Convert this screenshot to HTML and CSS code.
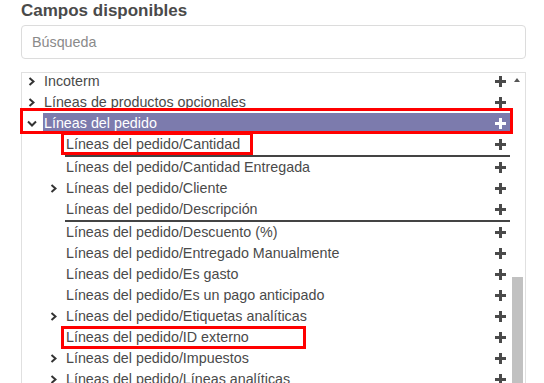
FILE: index.html
```html
<!DOCTYPE html>
<html>
<head>
<link rel="stylesheet" href="styles.css">
</head>
<body>

<div class="panel">
    <h3 class="title">Campos disponibles</h3>
    <input type="text" class="search" placeholder="Búsqueda">

    <div class="fields">
        <div class="tree">
            <div class="row">
                <span class="caret"><svg width="7" height="9" viewBox="0 0 7 9"><polyline points="1.5,1 5.5,4.5 1.5,8" /></svg></span>
                <div class="field"><span class="name">Incoterm</span><span class="add"><svg width="11" height="11" viewBox="0 0 11 11"><rect x="4" y="0" width="3" height="11"/><rect x="0" y="4" width="11" height="3"/></svg></span></div>
            </div>
            <div class="row">
                <span class="caret"><svg width="7" height="9" viewBox="0 0 7 9"><polyline points="1.5,1 5.5,4.5 1.5,8" /></svg></span>
                <div class="field"><span class="name">Líneas de productos opcionales</span><span class="add"><svg width="11" height="11" viewBox="0 0 11 11"><rect x="4" y="0" width="3" height="11"/><rect x="0" y="4" width="11" height="3"/></svg></span></div>
            </div>
            <div class="row open marked">
                <span class="caret"><svg width="10" height="7" viewBox="0 0 10 7"><polyline points="1,1.5 5,5.5 9,1.5" /></svg></span>
                <div class="field selected"><span class="name">Líneas del pedido</span><span class="add"><svg width="11" height="11" viewBox="0 0 11 11"><rect x="4" y="0" width="3" height="11"/><rect x="0" y="4" width="11" height="3"/></svg></span></div>
            </div>

            <div class="row child">
                <span class="caret"></span>
                <div class="field split mark-qty"><span class="name">Líneas del pedido/Cantidad</span><span class="add"><svg width="11" height="11" viewBox="0 0 11 11"><rect x="4" y="0" width="3" height="11"/><rect x="0" y="4" width="11" height="3"/></svg></span></div>
            </div>
            <div class="row child">
                <span class="caret"></span>
                <div class="field"><span class="name">Líneas del pedido/Cantidad Entregada</span><span class="add"><svg width="11" height="11" viewBox="0 0 11 11"><rect x="4" y="0" width="3" height="11"/><rect x="0" y="4" width="11" height="3"/></svg></span></div>
            </div>
            <div class="row child">
                <span class="caret"><svg width="7" height="9" viewBox="0 0 7 9"><polyline points="1.5,1 5.5,4.5 1.5,8" /></svg></span>
                <div class="field"><span class="name">Líneas del pedido/Cliente</span><span class="add"><svg width="11" height="11" viewBox="0 0 11 11"><rect x="4" y="0" width="3" height="11"/><rect x="0" y="4" width="11" height="3"/></svg></span></div>
            </div>
            <div class="row child">
                <span class="caret"></span>
                <div class="field split"><span class="name">Líneas del pedido/Descripción</span><span class="add"><svg width="11" height="11" viewBox="0 0 11 11"><rect x="4" y="0" width="3" height="11"/><rect x="0" y="4" width="11" height="3"/></svg></span></div>
            </div>
            <div class="row child">
                <span class="caret"></span>
                <div class="field"><span class="name">Líneas del pedido/Descuento (%)</span><span class="add"><svg width="11" height="11" viewBox="0 0 11 11"><rect x="4" y="0" width="3" height="11"/><rect x="0" y="4" width="11" height="3"/></svg></span></div>
            </div>
            <div class="row child">
                <span class="caret"></span>
                <div class="field"><span class="name">Líneas del pedido/Entregado Manualmente</span><span class="add"><svg width="11" height="11" viewBox="0 0 11 11"><rect x="4" y="0" width="3" height="11"/><rect x="0" y="4" width="11" height="3"/></svg></span></div>
            </div>
            <div class="row child">
                <span class="caret"></span>
                <div class="field"><span class="name">Líneas del pedido/Es gasto</span><span class="add"><svg width="11" height="11" viewBox="0 0 11 11"><rect x="4" y="0" width="3" height="11"/><rect x="0" y="4" width="11" height="3"/></svg></span></div>
            </div>
            <div class="row child">
                <span class="caret"></span>
                <div class="field"><span class="name">Líneas del pedido/Es un pago anticipado</span><span class="add"><svg width="11" height="11" viewBox="0 0 11 11"><rect x="4" y="0" width="3" height="11"/><rect x="0" y="4" width="11" height="3"/></svg></span></div>
            </div>
            <div class="row child">
                <span class="caret"><svg width="7" height="9" viewBox="0 0 7 9"><polyline points="1.5,1 5.5,4.5 1.5,8" /></svg></span>
                <div class="field"><span class="name">Líneas del pedido/Etiquetas analíticas</span><span class="add"><svg width="11" height="11" viewBox="0 0 11 11"><rect x="4" y="0" width="3" height="11"/><rect x="0" y="4" width="11" height="3"/></svg></span></div>
            </div>
            <div class="row child">
                <span class="caret"></span>
                <div class="field mark-id"><span class="name">Líneas del pedido/ID externo</span><span class="add"><svg width="11" height="11" viewBox="0 0 11 11"><rect x="4" y="0" width="3" height="11"/><rect x="0" y="4" width="11" height="3"/></svg></span></div>
            </div>
            <div class="row child">
                <span class="caret"><svg width="7" height="9" viewBox="0 0 7 9"><polyline points="1.5,1 5.5,4.5 1.5,8" /></svg></span>
                <div class="field"><span class="name">Líneas del pedido/Impuestos</span><span class="add"><svg width="11" height="11" viewBox="0 0 11 11"><rect x="4" y="0" width="3" height="11"/><rect x="0" y="4" width="11" height="3"/></svg></span></div>
            </div>
            <div class="row child">
                <span class="caret"><svg width="7" height="9" viewBox="0 0 7 9"><polyline points="1.5,1 5.5,4.5 1.5,8" /></svg></span>
                <div class="field"><span class="name">Líneas del pedido/Líneas analíticas</span><span class="add"><svg width="11" height="11" viewBox="0 0 11 11"><rect x="4" y="0" width="3" height="11"/><rect x="0" y="4" width="11" height="3"/></svg></span></div>
            </div>
        </div>

        <div class="scrollbar">
            <span class="arrow"></span>
            <span class="thumb"></span>
        </div>
    </div>
</div>

</body>
</html>
```

FILE: styles.css
```css
html, body {
    margin: 0;
    height: 383px;
    overflow: hidden;
    background-color: #fff;
    font-family: "Liberation Sans", Arial, sans-serif;
    color: #4a4a4a;
}

.panel {
    padding-left: 21px;
    width: 505px;
}

.title {
    margin: 0;
    padding-top: 1px;
    font-size: 17px;
    line-height: 20px;
    font-weight: bold;
    color: #4a4a4a;
}

.search {
    display: block;
    box-sizing: border-box;
    width: 505px;
    height: 34px;
    margin-top: 4px;
    padding: 0 10px;
    border: 1px solid #dcdcdc;
    border-radius: 4px;
    font-family: "Liberation Sans", Arial, sans-serif;
    font-size: 14.3px;
    color: #4a4a4a;
    outline: none;
}

.search::placeholder {
    color: #8a8a8a;
}

.fields {
    display: flex;
    margin-top: 13px;
    height: 330px;
    border: 1px solid #e0e0e0;
    border-bottom: none;
}

.tree {
    width: 488px;
    margin-top: -2px;
    font-size: 14.3px;
}

.row {
    display: flex;
    position: relative;
}

.row.child {
    padding-left: 22px;
}

.caret {
    width: 21px;
    height: 21px;
    display: flex;
    align-items: center;
    padding-left: 6px;
    box-sizing: border-box;
    flex-shrink: 0;
}

.caret svg polyline {
    fill: none;
    stroke: #333;
    stroke-width: 2;
}

.row.open .caret {
    padding-left: 5px;
}

.field {
    flex: 1;
    display: flex;
    align-items: center;
    justify-content: space-between;
    height: 21px;
    line-height: 21px;
    padding-left: 1px;
    padding-right: 4px;
    position: relative;
}

.field.split {
    border-bottom: 2px solid #444;
}

.field.selected {
    background-color: #7c7bad;
    color: #fff;
}

.add {
    display: flex;
}

.add svg {
    fill: #4a4a4a;
}

.field.selected .add svg {
    fill: #fff;
}

/* red annotation frames */
.row.marked::after,
.mark-qty::after,
.mark-id::after {
    content: "";
    position: absolute;
    border: 3px solid #f00;
    box-sizing: border-box;
    pointer-events: none;
}

.row.marked::after {
    left: -2px;
    top: -5px;
    width: 493px;
    height: 26px;
}

.mark-qty::after {
    left: -4px;
    top: -2px;
    width: 192px;
    height: 23px;
}

.mark-id::after {
    left: -4px;
    top: -1px;
    width: 245px;
    height: 23px;
}

.scrollbar {
    width: 15px;
    display: flex;
    flex-direction: column;
}

.arrow {
    width: 0;
    height: 0;
    margin: 5px 0 0 4px;
    border-left: 3.5px solid transparent;
    border-right: 3.5px solid transparent;
    border-bottom: 4px solid #555;
}

.thumb {
    width: 11px;
    height: 140px;
    margin: 195px 0 0 2px;
    background-color: #c1c1c1;
}
```
